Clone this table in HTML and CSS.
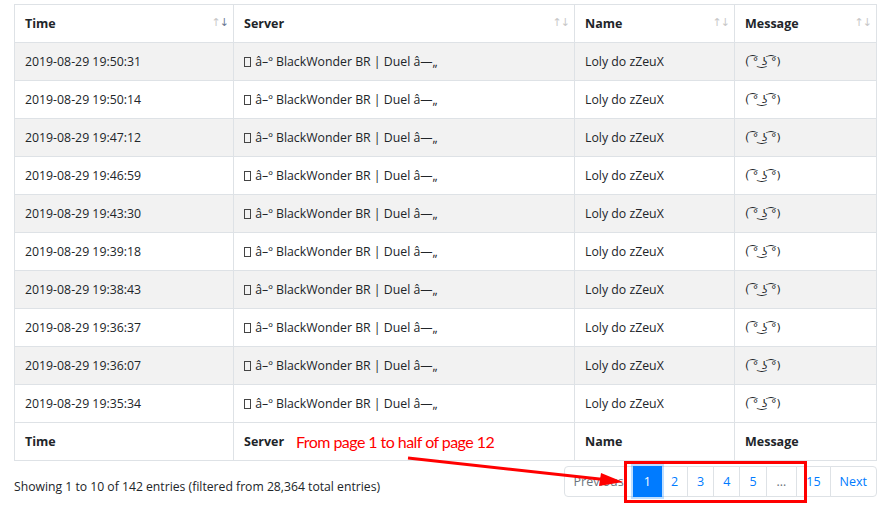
FILE: index.html
```html
<!DOCTYPE html>
<html>
<head>
<meta charset="utf-8">
<link rel="stylesheet" href="styles.css">
</head>
<body>
<div class="page">
  <table class="log">
    <thead>
      <tr>
        <th class="c-time"><div class="th-in"><span>Time</span><span class="sort"><span class="up">↑</span><span class="down active">↓</span></span></div></th>
        <th class="c-server"><div class="th-in"><span>Server</span><span class="sort"><span class="up">↑</span><span class="down">↓</span></span></div></th>
        <th class="c-name"><div class="th-in"><span>Name</span><span class="sort"><span class="up">↑</span><span class="down">↓</span></span></div></th>
        <th class="c-msg"><div class="th-in"><span>Message</span><span class="sort"><span class="up">↑</span><span class="down">↓</span></span></div></th>
      </tr>
    </thead>
    <tbody>
      <tr><td>2019-08-29 19:50:31</td><td><span class="tofu"></span> â–º BlackWonder BR | Duel â—„</td><td>Loly do zZeuX</td><td class="lenny">( ͡° ͜ʖ ͡°)</td></tr>
      <tr><td>2019-08-29 19:50:14</td><td><span class="tofu"></span> â–º BlackWonder BR | Duel â—„</td><td>Loly do zZeuX</td><td class="lenny">( ͡° ͜ʖ ͡°)</td></tr>
      <tr><td>2019-08-29 19:47:12</td><td><span class="tofu"></span> â–º BlackWonder BR | Duel â—„</td><td>Loly do zZeuX</td><td class="lenny">( ͡° ͜ʖ ͡°)</td></tr>
      <tr><td>2019-08-29 19:46:59</td><td><span class="tofu"></span> â–º BlackWonder BR | Duel â—„</td><td>Loly do zZeuX</td><td class="lenny">( ͡° ͜ʖ ͡°)</td></tr>
      <tr><td>2019-08-29 19:43:30</td><td><span class="tofu"></span> â–º BlackWonder BR | Duel â—„</td><td>Loly do zZeuX</td><td class="lenny">( ͡° ͜ʖ ͡°)</td></tr>
      <tr><td>2019-08-29 19:39:18</td><td><span class="tofu"></span> â–º BlackWonder BR | Duel â—„</td><td>Loly do zZeuX</td><td class="lenny">( ͡° ͜ʖ ͡°)</td></tr>
      <tr><td>2019-08-29 19:38:43</td><td><span class="tofu"></span> â–º BlackWonder BR | Duel â—„</td><td>Loly do zZeuX</td><td class="lenny">( ͡° ͜ʖ ͡°)</td></tr>
      <tr><td>2019-08-29 19:36:37</td><td><span class="tofu"></span> â–º BlackWonder BR | Duel â—„</td><td>Loly do zZeuX</td><td class="lenny">( ͡° ͜ʖ ͡°)</td></tr>
      <tr><td>2019-08-29 19:36:07</td><td><span class="tofu"></span> â–º BlackWonder BR | Duel â—„</td><td>Loly do zZeuX</td><td class="lenny">( ͡° ͜ʖ ͡°)</td></tr>
      <tr><td>2019-08-29 19:35:34</td><td><span class="tofu"></span> â–º BlackWonder BR | Duel â—„</td><td>Loly do zZeuX</td><td class="lenny">( ͡° ͜ʖ ͡°)</td></tr>
    </tbody>
    <tfoot>
      <tr><th>Time</th><th>Server</th><th>Name</th><th>Message</th></tr>
    </tfoot>
  </table>
  <div class="bottom">
    <div class="info">Showing 1 to 10 of 142 entries (filtered from 28,364 total entries)</div>
    <ul class="pager">
      <li class="disabled"><a>Previous</a></li>
      <li class="active"><a>1</a></li>
      <li><a>2</a></li>
      <li><a>3</a></li>
      <li><a>4</a></li>
      <li><a>5</a></li>
      <li class="dots"><a>…</a></li>
      <li><a>15</a></li>
      <li><a>Next</a></li>
    </ul>
  </div>
  <div class="note">From page 1 to half of page 12</div>
  <div class="redbox"></div>
  <svg class="arrow" width="894" height="506" viewBox="0 0 894 506">
    <line x1="408" y1="458" x2="604" y2="479.5" stroke="#f00" stroke-width="3"/>
    <polygon points="623,482 601,473 599,486" fill="#f00"/>
  </svg>
</div>
</body>
</html>
```

FILE: styles.css
```css
* { box-sizing: border-box; }
html, body { margin: 0; padding: 0; background: #fff; }
body {
  font-family: "Segoe UI", "Open Sans", "Noto Sans", "DejaVu Sans", sans-serif;
  color: #212529;
  font-size: 12.3px;
}
.page {
  position: relative;
  width: 894px;
  height: 506px;
  padding: 4px 18px 0 14px;
}
.log {
  width: 862px;
  border-collapse: collapse;
  table-layout: fixed;
  border: 1px solid #dee2e6;
}
.c-time { width: 219px; }
.c-server { width: 341px; }
.c-name { width: 160px; }
.c-msg { width: 142px; }
.log th, .log td {
  border: 1px solid #dee2e6;
  height: 38px;
  padding: 0 10px;
  text-align: left;
  vertical-align: middle;
  white-space: nowrap;
  overflow: hidden;
}
.log th { font-weight: 700; font-size: 12.5px; color: #212529; }
.th-in { display: flex; justify-content: space-between; align-items: center; }
.sort { font-size: 11px; font-weight: 400; color: #c8c8c8; letter-spacing: -1px; margin-right: -5px; margin-top: -4px; }
.sort .active { color: #6c7a94; }
.log tbody tr:nth-child(odd) td { background: #f2f2f2; }
.log td { color: #212529; }
.tofu {
  display: inline-block;
  width: 7px;
  height: 10px;
  border: 1px solid #444;
  vertical-align: -1px;
  margin-right: 1px;
}
.lenny { font-family: "DejaVu Sans", sans-serif; font-size: 11px; }
.bottom {
  display: flex;
  justify-content: space-between;
  align-items: flex-start;
  margin-top: 5px;
}
.info { font-size: 12.2px; color: #212529; padding-top: 12px; }
.pager {
  list-style: none;
  margin: 0;
  padding: 0;
  display: flex;
  margin-right: -1px;
}
.pager li a {
  display: block;
  height: 31px;
  line-height: 29px;
  padding: 0 9px;
  border: 1px solid #dee2e6;
  margin-left: -1px;
  color: #007bff;
  font-size: 12.5px;
  background: #fff;
}
.pager li:first-child a { margin-left: 0; border-radius: 4px 0 0 4px; padding: 0 9px; }
.pager li:last-child a { border-radius: 0 4px 4px 0; }
.pager li.disabled a { color: #6c757d; }
.pager li.active a {
  background: #007bff;
  border-color: #007bff;
  color: #fff;
  position: relative;
  z-index: 1;
  box-shadow: 0 0 0 2px rgba(0,123,255,.25);
  padding: 0 10px;
}
.pager li.dots a { color: #6c757d; padding: 0 10px; }
.note {
  position: absolute;
  left: 296px;
  top: 432px;
  color: #f00;
  font-size: 16px;
  letter-spacing: -0.55px;
  font-family: "Lato", sans-serif;
}
.redbox {
  position: absolute;
  left: 624px;
  top: 461px;
  width: 183px;
  height: 42px;
  border: 3px solid #f00;
}
.arrow { position: absolute; left: 0; top: 0; pointer-events: none; }
```
